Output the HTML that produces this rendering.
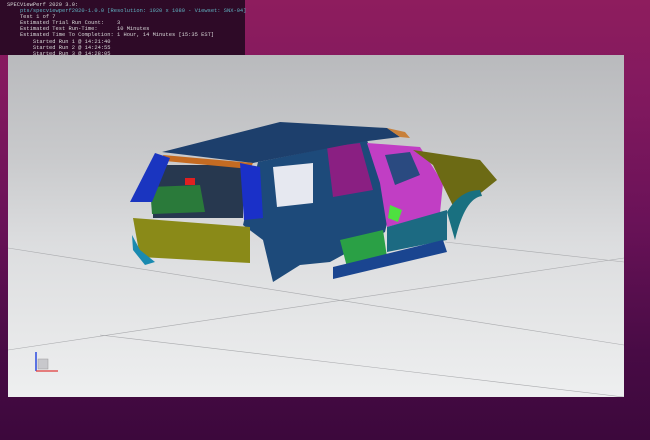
<!DOCTYPE html>
<html><head><style>
body{margin:0;width:650px;height:440px;overflow:hidden;position:relative;
background:linear-gradient(180deg,#8e1d5e 0%,#83195f 20%,#6a1258 50%,#480b45 80%,#3c083c 100%);font-family:"Liberation Mono",monospace}
#term{position:absolute;left:0;top:0;width:245px;height:55px;background:#2e0a27;color:#d8d8d8;font-size:5.4px;line-height:6.1px;padding:2px 0 0 7px;box-sizing:border-box;white-space:pre}
#win{position:absolute;left:8px;top:55px;width:616px;height:342px;background:linear-gradient(180deg,#b9babd 0%,#c9cacc 30%,#dcdddf 55%,#e6e7e8 80%,#eeeff0 100%);overflow:hidden}
</style></head><body>
<div id="term">SPECViewPerf 2020 3.0:
    <span style="color:#5fb0c0">pts/specviewperf2020-1.0.0 [Resolution: 1920 x 1080 - Viewset: SNX-04]</span>
    Test 1 of 7
    Estimated Trial Run Count:    3
    Estimated Test Run-Time:      10 Minutes
    Estimated Time To Completion: 1 Hour, 14 Minutes [15:35 EST]
        Started Run 1 @ 14:21:40
        Started Run 2 @ 14:24:55
        Started Run 3 @ 14:28:05</div>
<div id="win">
<svg width="616" height="342" viewBox="8 55 616 342">
<g stroke="#a9aaad" stroke-width="0.6" fill="none">
<line x1="8" y1="248" x2="624" y2="345"/>
<line x1="8" y1="350" x2="624" y2="258"/>
<line x1="100" y1="335" x2="624" y2="397"/>
<line x1="445" y1="242" x2="624" y2="262"/>
</g>
<polygon points="153,165 243,165 243,218 153,218" fill="#27384f"/>
<polygon points="150,187 200,185 205,212 152,214" fill="#2a7a3a"/>
<polygon points="185,178 195,178 195,185 185,185" fill="#e02020"/>
<polygon points="258,162 367,140 390,210 385,232 330,262 300,265 273,282 263,240 243,225" fill="#1d4a7a"/>
<polygon points="273,167 313,163 313,203 277,207" fill="#e6e8f0"/>
<polygon points="327,147 360,143 373,190 333,197" fill="#8a1f82"/>
<polygon points="367,143 420,147 443,183 440,213 387,227 380,183" fill="#c13ec4"/>
<polygon points="385,155 410,152 420,175 395,185" fill="#2a4a80"/>
<polygon points="413,150 480,160 497,180 482,192 455,210 433,165" fill="#6c6a14"/>
<path d="M447,212 Q460,190 480,190 L482,196 Q465,198 455,240 Z" fill="#197080"/>
<polygon points="387,227 447,210 447,240 387,252" fill="#1c6a82"/>
<polygon points="340,240 383,230 387,257 347,267" fill="#2aa045"/>
<polygon points="333,267 443,240 447,252 333,279" fill="#1a4590"/>
<polygon points="390,205 402,210 398,222 388,218" fill="#4ee040"/>
<polygon points="162,152 280,122 387,128 400,137 360,142 253,163" fill="#1d3f6c"/>
<polygon points="387,128 405,132 410,138 400,137" fill="#c8803a"/>
<polygon points="163,155 253,163 250,169 165,161" fill="#c46b22"/>
<polygon points="155,153 170,158 152,202 130,202" fill="#1a35c0"/>
<polygon points="240,163 260,167 263,218 244,220" fill="#1a30c8"/>
<polygon points="133,218 250,227 250,263 140,257" fill="#8a8a18"/>
<polygon points="132,235 140,250 155,262 145,265 133,250" fill="#1a8ab0"/>
<line x1="36" y1="371" x2="36" y2="352" stroke="#2a4ae0" stroke-width="1.5"/>
<line x1="36" y1="371" x2="58" y2="371" stroke="#e03a3a" stroke-width="1.3"/>
<rect x="38" y="359" width="10" height="10" fill="#c8c8cc" stroke="#999" stroke-width="0.5"/>
</svg>
</div>
</body></html>
